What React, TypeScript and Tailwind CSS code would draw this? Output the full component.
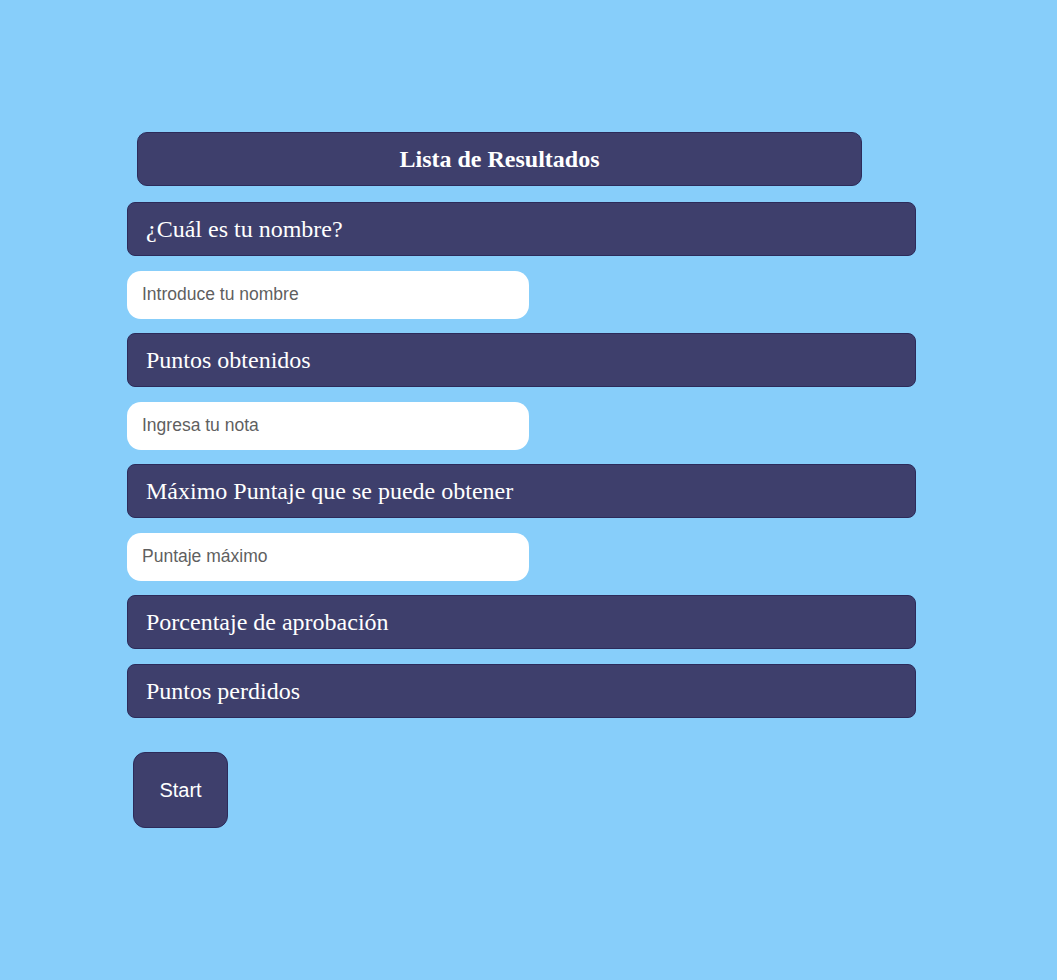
const fields = [
  { label: "¿Cuál es tu nombre?", placeholder: "Introduce tu nombre" },
  { label: "Puntos obtenidos", placeholder: "Ingresa tu nota" },
  { label: "Máximo Puntaje que se puede obtener", placeholder: "Puntaje máximo" },
];

const results = ["Porcentaje de aprobación", "Puntos perdidos"];

const Label: React.FC<{ text: string }> = ({ text }) => (
  <div className="h-[54px] w-[789px] rounded-lg border border-[#2c2b5a] bg-[#3e3f6c] pl-[18px] flex items-center text-[24px] text-white font-['Liberation_Serif',serif]">
    {text}
  </div>
);

export default function App() {
  return (
    <div className="min-h-[980px] bg-[#87cefa] pt-[132px] pl-[127px]">
      <div className="flex flex-col">
        <div className="ml-[10px] h-[54px] w-[725px] rounded-[10px] border border-[#2c2b5a] bg-[#3e3f6c] flex items-center justify-center text-[24px] font-bold text-white font-['Liberation_Serif',serif]">
          Lista de Resultados
        </div>
        <div className="mt-4 flex flex-col gap-[14.5px]">
          {fields.map((f) => (
            <div key={f.label} className="flex flex-col gap-[14.5px]">
              <Label text={f.label} />
              <input
                type="text"
                placeholder={f.placeholder}
                className="h-[48px] w-[402px] rounded-[14px] bg-white px-[15px] text-[17.5px] text-gray-800 placeholder:text-[#5f5f5f] outline-none font-['Liberation_Sans',sans-serif]"
              />
            </div>
          ))}
          {results.map((r) => (
            <Label key={r} text={r} />
          ))}
        </div>
        <button className="mt-[34px] ml-[6px] h-[76px] w-[95px] rounded-xl border border-[#2c2b5a] bg-[#3e3f6c] text-[20px] text-white font-['Liberation_Sans',sans-serif]">
          Start
        </button>
      </div>
    </div>
  );
}
